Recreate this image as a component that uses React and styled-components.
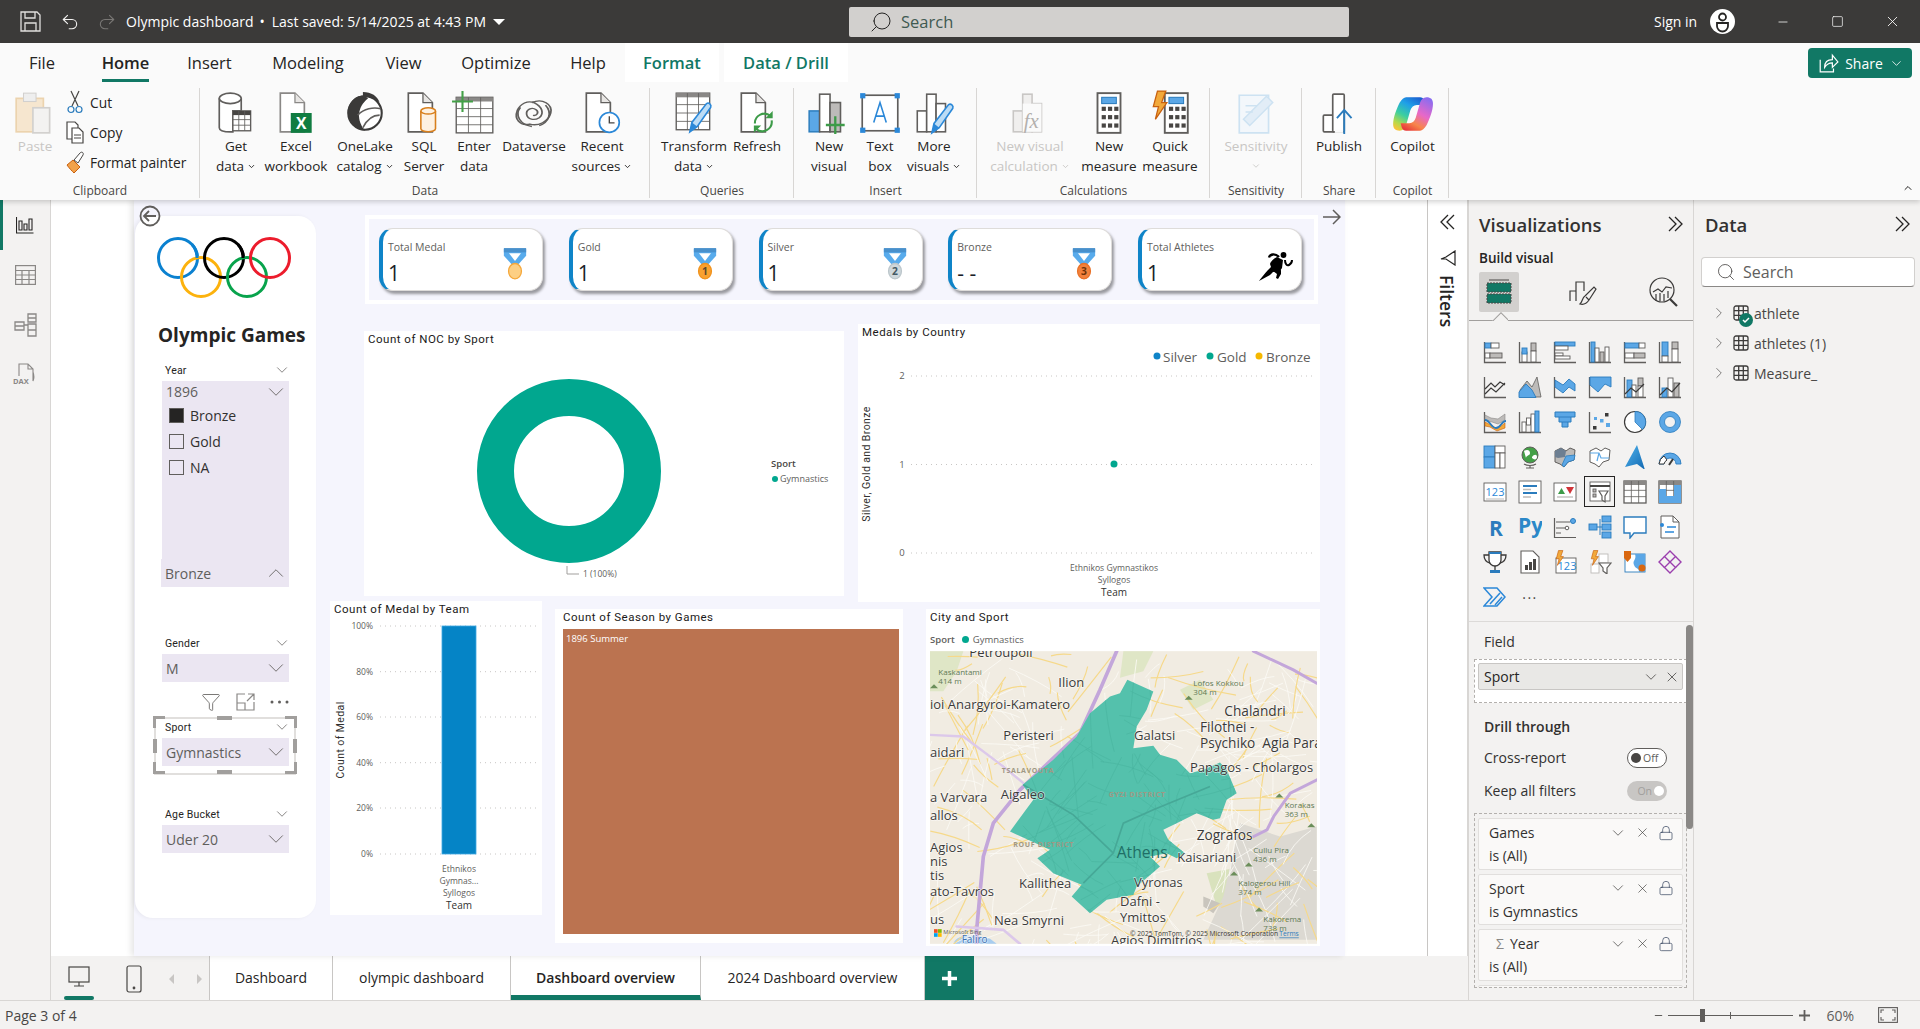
import React from "react";
import styled, { createGlobalStyle } from "styled-components";
import { ChevronDown, ChevronUp, ChevronRight, X, Search, Minus, Square, Lock, Undo2, Redo2, Filter } from "lucide-react";

const UI = '"Open Sans", "Noto Sans", sans-serif';
const DIN = 'Roboto, "Open Sans", sans-serif';
const DK = "#605e5c";
const BL = "#5ba7e6";
const BD = "#2b7cbd";
const GR = "#bdbbb9";

const GlobalStyle = createGlobalStyle`
  html, body { margin: 0; padding: 0; background: #f3f2f1; overflow: hidden; }
  body { font-family: ${UI}; color: #252423; }
  * { box-sizing: border-box; }
  svg { display: block; }
`;

const Shell = styled.div`
  width: 1920px;
  height: 1029px;
  display: flex;
  flex-direction: column;
  overflow: hidden;
`;

/* ---------- title bar ---------- */
const TitleBar = styled.header`
  height: 43px;
  flex: none;
  background: #3b3a39;
  color: #fff;
  display: flex;
  align-items: center;
  position: relative;
`;
const TitleLeft = styled.div`
  display: flex;
  align-items: center;
  width: 849px;
  padding-left: 20px;
  flex: none;
`;
const TitleText = styled.span`
  font-size: 14px;
  white-space: nowrap;
  margin-left: ${(p) => p.$ml || 0}px;
`;
const Caret = styled.span`
  width: 0;
  height: 0;
  border-left: 6px solid transparent;
  border-right: 6px solid transparent;
  border-top: 6px solid #fff;
  margin-left: 7px;
`;
const SearchBox = styled.div`
  width: 500px;
  height: 30px;
  flex: none;
  background: #d2d0ce;
  border-radius: 2px;
  display: flex;
  align-items: center;
  padding-left: 20px;
  gap: 8px;
  color: #3f5a52;
  font-size: 16.5px;
`;
const TitleRight = styled.div`
  display: flex;
  align-items: center;
  margin-left: 305px;
  flex: none;
`;
const SignIn = styled.span`
  font-size: 14px;
  width: 56px;
`;
const Avatar = styled.span`
  width: 25px;
  height: 25px;
  border-radius: 50%;
  background: #fff;
  display: flex;
  align-items: center;
  justify-content: center;
  margin-right: 20px;
`;
const WinBtn = styled.span`
  width: 55px;
  display: flex;
  justify-content: center;
`;
const Flip = styled.span`
  display: inline-flex;
  transform: scaleX(-1);
`;

/* ---------- ribbon ---------- */
const Ribbon = styled.div`
  height: 157px;
  flex: none;
  background: #fafafa;
  box-shadow: 0 2px 5px rgba(0, 0, 0, 0.18);
  position: relative;
  z-index: 3;
`;
const TabsRow = styled.nav`
  height: 39px;
  display: flex;
  align-items: stretch;
  position: relative;
`;
const RibbonTab = styled.span`
  position: relative;
  display: flex;
  align-items: center;
  justify-content: center;
  width: ${(p) => p.$w}px;
  margin-left: ${(p) => p.$ml || 0}px;
  font-size: 16.5px;
  white-space: nowrap;
  font-weight: ${(p) => (p.$active || p.$ctx ? 600 : 400)};
  color: ${(p) => (p.$ctx ? "#117865" : "#252423")};
  background: ${(p) => (p.$ctx ? "#fff" : "transparent")};
  ${(p) =>
    p.$active &&
    `&::after { content: ""; position: absolute; left: 0; right: 0; bottom: 0; height: 3px; background: #117865; }`}
`;
const ShareBtn = styled.button`
  position: absolute;
  left: 1808px;
  top: 5px;
  width: 104px;
  height: 30px;
  border: 0;
  border-radius: 4px;
  background: #117865;
  color: #fff;
  font: 400 14px ${UI};
  display: flex;
  align-items: center;
  justify-content: center;
  gap: 6px;
  padding: 0 0 0 2px;
`;
const ToolsRow = styled.div`
  display: flex;
  padding-top: 6px;
  position: relative;
`;
const Group = styled.section`
  width: ${(p) => p.$w}px;
  height: 112px;
  flex: none;
  display: flex;
  flex-direction: column;
  position: relative;
  &::after {
    content: "";
    position: absolute;
    right: 0;
    top: 0;
    bottom: 2px;
    width: 1px;
    background: #d8d6d4;
  }
`;
const GroupBody = styled.div`
  height: 94px;
  flex: none;
  display: flex;
  padding-top: 2px;
  padding-left: ${(p) => p.$pl || 0}px;
  justify-content: ${(p) => (p.$center ? "center" : "flex-start")};
`;
const GroupLabel = styled.div`
  height: 18px;
  text-align: center;
  font-size: 12px;
  line-height: 18px;
  color: #484644;
`;
const BigBtn = styled.div`
  width: ${(p) => p.$w}px;
  flex: none;
  display: flex;
  flex-direction: column;
  align-items: center;
  font-size: 13.5px;
  line-height: 20px;
  white-space: nowrap;
  color: ${(p) => (p.$off ? "#c8c6c4" : "#252423")};
`;
const IconBox = styled.div`
  height: 46px;
  display: flex;
  align-items: flex-start;
  justify-content: center;
`;
const BtnLine = styled.span`
  display: flex;
  align-items: center;
  gap: 3px;
  height: 20px;
`;
const SmallCol = styled.div`
  display: flex;
  flex-direction: column;
  margin-top: -3px;
`;
const SmallBtn = styled.div`
  height: 30px;
  display: flex;
  align-items: center;
  gap: 6px;
  font-size: 13.8px;
  white-space: nowrap;
`;
const RibbonSvg = styled.svg`
  width: 46px;
  height: 46px;
`;
const Collapse = styled.span`
  position: absolute;
  left: 1902px;
  top: 100px;
`;

/* ---------- main ---------- */
const Main = styled.div`
  flex: 1;
  display: flex;
  min-height: 0;
`;
const Rail = styled.aside`
  width: 51px;
  flex: none;
  background: #f3f2f1;
  border-right: 1px solid #d8d6d4;
  display: flex;
  flex-direction: column;
  align-items: center;
`;
const RailItem = styled.div`
  width: 100%;
  height: 50px;
  display: flex;
  align-items: center;
  justify-content: center;
  position: relative;
  ${(p) =>
    p.$active &&
    `&::before { content: ""; position: absolute; left: 0; top: 0; bottom: 0; width: 3px; background: #117865; }`}
`;
const CenterCol = styled.div`
  width: 1417px;
  flex: none;
  display: flex;
  flex-direction: column;
`;
const CanvasRow = styled.div`
  height: 756px;
  display: flex;
  background: #fff;
`;
const Canvas = styled.main`
  width: 1377px;
  flex: none;
  padding-left: 83px;
  border-right: 1px solid #c8c6c4;
`;
const Page = styled.div`
  position: relative;
  width: 1211px;
  height: 756px;
  background: #f5f5fd;
  box-shadow: -3px 0 6px rgba(0, 0, 0, 0.1);
  display: flex;
  padding-top: 15px;
`;
const NavArrow = styled.span`
  position: absolute;
  left: ${(p) => p.$x}px;
  top: ${(p) => p.$y}px;
  z-index: 2;
`;

/* ---------- left slicer card ---------- */
const SideCard = styled.div`
  width: 181px;
  height: 702px;
  margin: 1px 0 0 1px;
  background: #fff;
  border-radius: 18px;
  box-shadow: -2px 0 4px rgba(0, 0, 0, 0.06);
  display: flex;
  flex-direction: column;
  flex: none;
`;
const Logo = styled.svg`
  width: 140px;
  height: 66px;
  margin: 20px 0 0 21px;
`;
const SideTitle = styled.h1`
  margin: 13px 0 0;
  height: 44px;
  padding-left: 23px;
  font: 700 19px/40px ${UI};
  color: #252423;
  white-space: nowrap;
`;
const Slicer = styled.div`
  margin: ${(p) => p.$mt || 0}px 0 0 27px;
  width: 127px;
`;
const SlicerHead = styled.div`
  height: 19px;
  padding: 0 0 3px 3px;
  display: flex;
  justify-content: space-between;
  align-items: center;
  font: 400 10.5px ${DIN};
  color: #252423;
  letter-spacing: 0.2px;
  & > svg {
    margin-right: -2px;
  }
`;
const SelectBox = styled.div`
  height: ${(p) => p.$h || 28}px;
  background: #ebe6f2;
  display: flex;
  justify-content: space-between;
  align-items: center;
  padding: 0 0 0 4px;
  font-size: 14px;
  color: #605e5c;
  margin-left: ${(p) => p.$ml || 0}px;
`;
const ListBox = styled.div`
  height: 157px;
  background: #ebe6f2;
  padding: 0 0 0 7px;
`;
const Option = styled.div`
  height: 26px;
  display: flex;
  align-items: center;
  gap: 6px;
  font-size: 14px;
  color: #323130;
`;
const Check = styled.span`
  width: 15px;
  height: 15px;
  border: 1px solid #605e5c;
  background: ${(p) => (p.$on ? "#252423" : "transparent")};
`;
const VisualTools = styled.div`
  height: 20px;
  margin: 10px 0 0 66px;
  display: flex;
  align-items: center;
  gap: 15px;
`;
const Frame = styled.div`
  position: relative;
  margin: 5px 0 0 19px;
  width: 142px;
  height: 58px;
  padding: 0 5px 0 6px;
  border: 2px solid #e1dfdd;
`;
const Handle = styled.i`
  position: absolute;
  background: #a19f9d;
  width: ${(p) => p.$w}px;
  height: ${(p) => p.$h}px;
  left: ${(p) => p.$l}px;
  top: ${(p) => p.$t}px;
`;

/* ---------- right part of the report ---------- */
const ReportCol = styled.div`
  margin-left: 14px;
  width: 990px;
  flex: none;
  display: flex;
  flex-direction: column;
`;
const KpiStrip = styled.div`
  margin-left: 35px;
  width: 953px;
  height: 89px;
  border: 4px solid #fff;
  background: #f5f5fd;
  display: flex;
  gap: 25.75px;
  padding: 9px 0 0 10px;
`;
const KpiCard = styled.div`
  width: 164px;
  height: 63px;
  flex: none;
  position: relative;
  background: #fff;
  border-radius: 14px;
  border: 1px solid #dedcda;
  border-left: 4px solid #0f84c8;
  box-shadow: 2px 3px 3px rgba(0, 0, 0, 0.38);
  padding: 8px 0 0 5px;
`;
const KpiLabel = styled.div`
  font-size: 10.5px;
  line-height: 20px;
  color: #605e5c;
`;
const KpiValue = styled.div`
  font-size: 21px;
  font-weight: 400;
  line-height: 28px;
  color: #1b1f2a;
  margin-top: 2px;
`;
const KpiIcon = styled.span`
  position: absolute;
  right: ${(p) => p.$r}px;
  top: ${(p) => p.$t}px;
`;
const ChartRow = styled.div`
  display: flex;
  align-items: flex-start;
  margin-top: ${(p) => p.$mt || 0}px;
`;
const Panel = styled.section`
  width: ${(p) => p.$w}px;
  height: ${(p) => p.$h}px;
  margin: ${(p) => p.$mt || 0}px 0 0 ${(p) => p.$ml || 0}px;
  background: #fff;
  flex: none;
`;
const PanelTitle = styled.h2`
  margin: 0;
  height: 16px;
  padding-left: ${(p) => p.$pl || 4}px;
  font: 400 11.5px/16px ${DIN};
  letter-spacing: 0.5px;
  color: #1b1a19;
  white-space: nowrap;
`;
const Treemap = styled.div`
  margin: 4px 4px 0 8px;
  height: 305px;
  background: #bb7350;
  color: #fff;
  font: 400 9.5px/20px ${UI};
  padding-left: 3px;
`;
const MapLegend = styled.div`
  height: 26px;
  padding: 2px 0 0 4px;
  display: flex;
  align-items: center;
  gap: 4px;
  font-size: 9.5px;
  color: #605e5c;
`;
const LegendName = styled.b`
  font-weight: 600;
  margin-right: 3px;
`;
const LegendDot = styled.i`
  width: 7px;
  height: 7px;
  border-radius: 50%;
  background: #01a78f;
`;
const MapSvg = styled.svg`
  width: 387px;
  height: 293px;
  margin-left: 4px;
`;

/* ---------- filters pane ---------- */
const FilterPane = styled.aside`
  width: 40px;
  flex: none;
  background: #fff;
  display: flex;
  flex-direction: column;
  align-items: center;
  padding-top: 14px;
  border-right: 1px solid #d8d6d4;
`;
const FilterLabel = styled.span`
  writing-mode: vertical-rl;
  font-size: 17.5px;
  font-weight: 600;
  margin-top: 9px;
  margin-left: -1px;
`;

/* ---------- page tabs ---------- */
const PageTabs = styled.div`
  height: 44px;
  display: flex;
  background: #f3f2f1;
`;
const TabTools = styled.div`
  width: 159px;
  flex: none;
  display: flex;
  align-items: flex-start;
  padding: 9px 0 0 13px;
  border-right: 1px solid #c8c6c4;
`;
const DeviceBtn = styled.div`
  width: 30px;
  height: 29px;
  display: flex;
  justify-content: center;
  position: relative;
  margin-right: ${(p) => p.$mr || 0}px;
  ${(p) =>
    p.$active &&
    `&::after { content: ""; position: absolute; left: 0; right: 0; bottom: -6px; height: 4px; border-radius: 2px; background: #117865; }`}
`;
const PageTab = styled.div`
  width: ${(p) => p.$w}px;
  flex: none;
  background: #fff;
  border-right: 1px solid #c8c6c4;
  display: flex;
  align-items: center;
  justify-content: center;
  font-size: 14px;
  font-weight: ${(p) => (p.$active ? 600 : 400)};
  border-bottom: ${(p) => (p.$active ? "5px solid #117865" : "0")};
  padding-top: ${(p) => (p.$active ? 3 : 0)}px;
  padding-bottom: ${(p) => (p.$active ? 0 : 2)}px;
`;
const AddTab = styled.div`
  width: 49px;
  background: #117865;
  display: flex;
  align-items: center;
  justify-content: center;
`;

/* ---------- side panes ---------- */
const VizPane = styled.aside`
  width: 226px;
  flex: none;
  background: #f3f2f1;
  border-right: 1px solid #d8d6d4;
  border-left: 1px solid #d8d6d4;
  display: flex;
  flex-direction: column;
  position: relative;
`;
const PaneHead = styled.div`
  height: 48px;
  padding: 0 10px 0 ${(p) => p.$pl}px;
  display: flex;
  align-items: center;
  justify-content: space-between;
  font-size: 18.5px;
  font-weight: 600;
  color: #323130;
`;
const BuildLabel = styled.div`
  padding-left: 10px;
  font-size: 13.5px;
  font-weight: 600;
  line-height: 16px;
  margin-top: 2px;
`;
const BuildTabs = styled.div`
  height: 49px;
  margin-top: 6px;
  padding-left: 10px;
  display: flex;
  align-items: flex-start;
  position: relative;
  border-bottom: 1px solid #a19f9d;
`;
const BuildTab = styled.div`
  width: 40px;
  height: 40px;
  border-radius: 2px;
  display: flex;
  align-items: center;
  justify-content: center;
  margin-right: ${(p) => p.$mr || 0}px;
  background: ${(p) => (p.$active ? "#d2d0ce" : "transparent")};
`;
const Notch = styled.span`
  position: absolute;
  left: 23px;
  bottom: -1px;
  width: 16px;
  height: 9px;
  overflow: hidden;
  &::after {
    content: "";
    position: absolute;
    left: 2px;
    top: 3px;
    width: 12px;
    height: 12px;
    transform: rotate(45deg);
    background: #f3f2f1;
    border: 1px solid #a19f9d;
  }
`;
const VizGrid = styled.div`
  display: grid;
  grid-template-columns: repeat(6, 35px);
  grid-auto-rows: 35px;
  padding: 13px 0 0 8px;
  height: 300px;
  flex: none;
`;
const VizCell = styled.div`
  display: flex;
  align-items: center;
  justify-content: center;
  outline: ${(p) => (p.$on ? "1px solid #252423" : "none")};
  outline-offset: -3px;
  & > svg {
    width: 24px;
    height: 24px;
  }
`;
const WellArea = styled.div`
  flex: 1;
  border-top: 1px solid #dcdad8;
  position: relative;
  padding: 8px 0 0 15px;
  overflow: hidden;
`;
const ScrollThumb = styled.span`
  position: absolute;
  right: 0;
  top: 3px;
  width: 7px;
  height: 204px;
  border-radius: 4px;
  background: #8a8886;
`;
const WellLabel = styled.div`
  font-size: 14px;
  line-height: 24px;
  color: #323130;
  font-weight: ${(p) => (p.$bold ? 600 : 400)};
  margin-top: ${(p) => p.$mt || 0}px;
`;
const DropZone = styled.div`
  width: 213px;
  margin: ${(p) => p.$mt || 0}px 0 0 -10px;
  border: 1px dashed #b3b0ad;
  padding: 4px;
  height: ${(p) => p.$h}px;
  background: ${(p) => (p.$white ? "#fff" : "transparent")};
  overflow: hidden;
`;
const FieldPill = styled.div`
  height: 27px;
  background: #e9e8e6;
  border: 1px solid #c8c6c4;
  border-radius: 2px;
  padding: 0 2px 0 5px;
  display: flex;
  align-items: center;
  justify-content: space-between;
  font-size: 14px;
  margin: -1px;
`;
const PillIcons = styled.span`
  display: flex;
  align-items: center;
  gap: 4px;
`;
const SwitchRow = styled.div`
  display: flex;
  justify-content: space-between;
  align-items: center;
  width: 183px;
  height: 33px;
  font-size: 14px;
  color: #323130;
  margin-top: ${(p) => p.$mt || 0}px;
`;
const Toggle = styled.span`
  width: 40px;
  height: 20px;
  border-radius: 10px;
  display: flex;
  align-items: center;
  justify-content: ${(p) => (p.$on ? "flex-end" : "flex-start")};
  gap: 2px;
  padding: 0 3px;
  font-size: 10.5px;
  color: ${(p) => (p.$on ? "#a19f9d" : "#605e5c")};
  background: ${(p) => (p.$on ? "#c8c6c4" : "#fff")};
  border: ${(p) => (p.$on ? "0" : "1px solid #605e5c")};
`;
const ToggleKnob = styled.i`
  width: 10px;
  height: 10px;
  border-radius: 50%;
  background: ${(p) => (p.$on ? "#fff" : "#484644")};
`;
const FilterCard = styled.div`
  height: 51.5px;
  margin-bottom: 4px;
  background: #faf9f8;
  border: 1px solid #e1dfdd;
  border-radius: 2px;
  padding: 2px 8px 2px 10px;
  font-size: 14px;
  line-height: 23px;
  color: #323130;
  margin-left: -1px;
  margin-right: -1px;
`;
const FilterHead = styled.div`
  display: flex;
  justify-content: space-between;
  align-items: center;
`;
const FilterName = styled.span`
  display: flex;
  align-items: center;
  gap: 6px;
  padding-left: ${(p) => (p.$sum ? 7 : 0)}px;
`;
const FilterIcons = styled.span`
  display: flex;
  align-items: center;
  gap: 8px;
`;
const Sigma = styled.span`
  color: #8a8886;
  font-size: 14px;
`;
const DataPane = styled.aside`
  flex: 1;
  background: #f3f2f1;
`;
const DataSearch = styled.div`
  width: 214px;
  height: 30px;
  margin: 9px 0 0 7px;
  background: #fff;
  border: 1px solid #d2d0ce;
  border-bottom: 1px solid #8a8886;
  border-radius: 4px;
  display: flex;
  align-items: center;
  gap: 7px;
  padding-left: 14px;
  font-size: 16px;
  color: #605e5c;
`;
const TreeList = styled.div`
  padding: 11px 0 0 16px;
`;
const TreeRow = styled.div`
  height: 30px;
  display: flex;
  align-items: center;
  font-size: 14px;
  color: #484644;
  position: relative;
  gap: 5px;
`;
const TreeBadge = styled.span`
  position: absolute;
  left: 29px;
  top: 15px;
  width: 14px;
  height: 14px;
  border-radius: 50%;
  background: #117865;
  display: flex;
  align-items: center;
  justify-content: center;
`;

/* ---------- status bar ---------- */
const StatusBar = styled.footer`
  height: 29px;
  flex: none;
  background: #f3f2f1;
  border-top: 1px solid #d8d6d4;
  display: flex;
  align-items: center;
  padding-left: 5px;
  font-size: 14px;
  color: #484644;
`;
const Zoomer = styled.div`
  margin-left: auto;
  display: flex;
  align-items: center;
  padding-right: 22px;
`;
const ZoomTrack = styled.div`
  position: relative;
  width: 125px;
  height: 1px;
  background: #605e5c;
  margin: 0 6px 0 4px;
`;
const ZoomThumb = styled.i`
  position: absolute;
  left: 32px;
  top: -6px;
  width: 5px;
  height: 13px;
  background: #605e5c;
`;
const ZoomTick = styled.i`
  position: absolute;
  left: 62px;
  top: -3px;
  width: 1px;
  height: 7px;
  background: #605e5c;
`;
const ZoomPct = styled.span`
  font-size: 14px;
  margin: 0 24px 0 16px;
  color: #605e5c;
`;

/* ---------- icons: ribbon ---------- */
const Doc = ({ c = DK }) => (
  <>
    <path d="M7 3h14l9 9v28H7z" fill="#fff" stroke={c} strokeWidth="1.6" />
    <path d="M21 3v9h9" fill="#e8e6e4" stroke={c} strokeWidth="1.2" />
  </>
);
const Pen = ({ x = 0, y = 0 }) => (
  <g transform={`translate(${x} ${y})`}>
    <path d="M3 29 5 20 19 2c2-1.5 5 1 4 3.5L10 24z" fill="#bcdcf5" stroke="#2b88d8" strokeWidth="1.5" />
    <path d="M3 29l2-9 5 4z" fill="#2b88d8" />
  </g>
);
const Bars = ({ c = DK, f = "#fff" }) => (
  <>
    <rect x="6" y="20" width="9" height="20" fill={f} stroke={c} strokeWidth="1.5" />
    <rect x="15" y="4" width="9" height="36" fill={f} stroke={c} strokeWidth="1.5" />
    <rect x="24" y="13" width="9" height="27" fill={f} stroke={c} strokeWidth="1.5" />
  </>
);
const Grid = ({ x, y, w, h, c = DK, head = "#8a8886", rows = 3, cols = 3 }) => {
  const lines = [];
  for (let i = 1; i < rows; i++) lines.push(`M${x} ${y + 3 + ((h - 3) * i) / rows}h${w}`);
  for (let i = 1; i < cols; i++) lines.push(`M${x + (w * i) / cols} ${y}v${h}`);
  return (
    <>
      <rect x={x} y={y} width={w} height={h} fill="#fff" stroke={c} strokeWidth="1.3" />
      <rect x={x} y={y} width={w} height="4" fill={head} />
      <path d={lines.join("")} stroke={c} strokeWidth="0.8" />
    </>
  );
};
const Calc = ({ x = 0 }) => {
  const keys = [];
  for (let r = 0; r < 3; r++)
    for (let c = 0; c < 3; c++)
      keys.push(<rect key={`${r}${c}`} x={x + 4 + c * 6} y={16 + r * 8} width="4" height="4" fill="#484644" />);
  return (
    <>
      <rect x={x} y="3" width="22" height="38" fill="#fff" stroke={DK} strokeWidth="1.8" />
      <rect x={x + 4} y="7" width="14" height="6" fill="#5ba7e6" stroke="#2b7cbd" />
      {keys}
    </>
  );
};
const Bolt = () => <path d="M10 1h8l-4 11h5L8 28l3-12H6z" fill="#f2a93b" stroke="#c8600f" strokeWidth="1.2" />;

const ribbonIcons = {
  paste: (
    <>
      <rect x="4" y="8" width="26" height="32" fill="#f6e6cf" stroke="#ecd3ae" strokeWidth="1.6" />
      <rect x="11" y="3" width="12" height="8" fill="#eee" stroke="#d2d0ce" />
      <rect x="20" y="17" width="16" height="24" fill="#f3f2f1" stroke="#d2d0ce" strokeWidth="1.6" />
    </>
  ),
  getData: (
    <>
      <path d="M6 8v28c0 3 5 4 11 4h2V20h8V8" fill="#fff" stroke={DK} strokeWidth="1.6" />
      <ellipse cx="16.5" cy="8" rx="10.5" ry="5" fill="#fff" stroke={DK} strokeWidth="1.6" />
      <Grid x={19} y={20} w={17} h={19} head="#484644" />
    </>
  ),
  excel: (
    <>
      <Doc c="#8a8886" />
      <rect x="17" y="22" width="20" height="19" fill="#107c41" />
      <text x="27" y="37" fontSize="15" fontWeight="700" fill="#fff" textAnchor="middle" fontFamily={UI}>X</text>
    </>
  ),
  onelake: (
    <>
      <circle cx="22" cy="22" r="16" fill="#fff" stroke="#3b3a39" strokeWidth="2" />
      <path d="M22 6c-10-3-20 10-15 22 6 10 15 11 15 11-8-10-8-22 3-31z" fill="#3b3a39" />
      <path d="M20 2c8 0 14 4 16 10-5-4-12-6-16-5z" fill="#3b3a39" />
      <path d="M15 24c6-6 15-8 22-6M20 36c4-8 10-12 16-12" fill="none" stroke="#605e5c" strokeWidth="1.5" />
    </>
  ),
  sql: (
    <>
      <Doc />
      <path d="M19 20v17c0 2 4 3 7 3s7-1 7-3V20" fill="#fdf1e2" stroke="#d87f1c" strokeWidth="1.5" />
      <ellipse cx="26" cy="20" rx="7" ry="3" fill="#fdf1e2" stroke="#d87f1c" strokeWidth="1.5" />
    </>
  ),
  enter: (
    <>
      <Grid x={5} y={7} w={35} h={34} rows={4} />
      <path d="M11 1v20M1 11h20" stroke="#43a047" strokeWidth="2" />
    </>
  ),
  dataverse: (
    <g fill="none" stroke={DK} strokeWidth="1.7" transform="translate(0 6) scale(1 0.76)">
      <path d="M20 8C30 2 40 10 38 21c-2 11-12 17-20 14C8 38 3 28 6 18 9 9 16 5 22 8c8 5 10 14 5 19-5 4-11 2-12-4-1-6 5-10 9-6 3 3 1 8-3 7" />
      <path d="M9 14C3 24 9 36 20 38M33 11c7 10 3 22-6 26" />
    </g>
  ),
  recent: (
    <>
      <Doc />
      <circle cx="29" cy="31" r="9.5" fill="#fff" stroke="#2b88d8" strokeWidth="1.6" />
      <path d="M29 25v6.5h5" fill="none" stroke="#484644" strokeWidth="1.3" />
    </>
  ),
  transform: (
    <>
      <Grid x={5} y={3} w={32} h={35} rows={4} />
      <Pen x={15} y={11} />
    </>
  ),
  refresh: (
    <>
      <Doc />
      <g fill="none" stroke="#3d9b48" strokeWidth="2">
        <path d="M20 32a9 9 0 0 1 15-7" />
        <path d="M36 29a9 9 0 0 1-15 8" />
      </g>
      <path d="M37 20v7h-7zM19 41v-7h7z" fill="#3d9b48" />
    </>
  ),
  newVisual: (
    <>
      <rect x="3" y="20" width="10" height="20" fill="#5ba7e6" stroke="#2b7cbd" strokeWidth="1.4" />
      <rect x="13" y="4" width="10" height="36" fill="#fff" stroke={DK} strokeWidth="1.5" />
      <rect x="23" y="12" width="10" height="28" fill="#bdbbb9" stroke={DK} strokeWidth="1.5" />
      <path d="M28 25v17M19 33.5h18" stroke="#3d9b48" strokeWidth="2.2" />
    </>
  ),
  textBox: (
    <>
      <rect x="5" y="5" width="34" height="34" fill="#fff" stroke={DK} strokeWidth="1.6" />
      <g fill="#2b88d8">
        <rect x="3" y="3" width="5" height="5" />
        <rect x="36" y="3" width="5" height="5" />
        <rect x="3" y="36" width="5" height="5" />
        <rect x="36" y="36" width="5" height="5" />
      </g>
      <path d="M16 31l6-19 6 19M18 25h8" fill="none" stroke="#2b88d8" strokeWidth="1.5" />
    </>
  ),
  moreVisuals: (
    <>
      <Bars />
      <Pen x={17} y={12} />
    </>
  ),
  calcVisual: (
    <>
      <Bars c="#c8c6c4" f="#f0efee" />
      <rect x="15" y="13" width="18" height="27" fill="#fafafa" />
      <text x="16" y="36" fontSize="20" fontStyle="italic" fontFamily='"Liberation Serif", serif' fill="#b3b0ad">fx</text>
    </>
  ),
  measure: <Calc x={11} />,
  quick: (
    <>
      <Calc x={17} />
      <Bolt />
    </>
  ),
  sensitivity: (
    <g opacity="0.55">
      <path d="M6 5h28v36H6z" fill="#eef6fc" stroke="#a9cfec" strokeWidth="1.6" />
      <path d="M10 28l22-22 6 6-22 22z" fill="#cfe4f5" stroke="#a9cfec" strokeWidth="1.4" />
      <path d="M12 15h11M12 21h7" stroke="#a9cfec" strokeWidth="1.4" />
    </g>
  ),
  publish: (
    <>
      <rect x="7" y="24" width="11" height="16" rx="1" fill="#fff" stroke={DK} strokeWidth="1.6" />
      <rect x="16" y="4" width="11" height="36" rx="1" fill="#fff" stroke={DK} strokeWidth="1.6" />
      <rect x="18" y="38" width="8" height="3" fill="#fafafa" />
      <path d="M27 42V20M20 27l7-8 7 8" fill="none" stroke="#2b7cbd" strokeWidth="1.8" />
    </>
  ),
  copilot: (
    <>
      <defs>
        <linearGradient id="cpA" gradientUnits="userSpaceOnUse" x1="24" y1="1" x2="6" y2="32">
          <stop offset="0" stopColor="#1b5fd0" />
          <stop offset="0.3" stopColor="#1fa0e8" />
          <stop offset="0.6" stopColor="#3ccfa0" />
          <stop offset="0.85" stopColor="#b6d94a" />
          <stop offset="1" stopColor="#f7c53a" />
        </linearGradient>
        <linearGradient id="cpB" gradientUnits="userSpaceOnUse" x1="24" y1="1" x2="6" y2="32">
          <stop offset="0" stopColor="#e83a3a" />
          <stop offset="0.25" stopColor="#f7864a" />
          <stop offset="0.55" stopColor="#e868c8" />
          <stop offset="1" stopColor="#8a6cf0" />
        </linearGradient>
      </defs>
      <g transform="translate(3 6) scale(1.03)">
        <path d="M12 1H25c2 0 3 1 4 3l1 4h-8c-3 0-5 2-6 5l-4 14c-1 3-3 5-6 5-4 0-6-2-6-6 0-6 3-14 6-20C8 3 10 1 12 1z" fill="url(#cpA)" />
        <path transform="rotate(180 18.5 16.5)" d="M12 1H25c2 0 3 1 4 3l1 4h-8c-3 0-5 2-6 5l-4 14c-1 3-3 5-6 5-4 0-6-2-6-6 0-6 3-14 6-20C8 3 10 1 12 1z" fill="url(#cpB)" />
      </g>
    </>
  ),
};
const RI = ({ n }) => <RibbonSvg viewBox="0 0 44 44">{ribbonIcons[n]}</RibbonSvg>;

const Big = ({ w, icon, lines, caret, off }) => (
  <BigBtn $w={w} $off={off}>
    <IconBox>
      <RI n={icon} />
    </IconBox>
    {lines.map((l, i) => (
      <BtnLine key={l + i}>
        {l}
        {caret && i === lines.length - 1 && <ChevronDown size={9} strokeWidth={2.4} />}
      </BtnLine>
    ))}
  </BigBtn>
);

/* ---------- icons: visual gallery ---------- */
const Ax = () => <path d="M1.5 2v20.5H23" fill="none" stroke={DK} strokeWidth="1.3" />;
const R = (x, y, w, h, f = "#fff", s = DK) => <rect x={x} y={y} width={w} height={h} fill={f} stroke={s} strokeWidth="0.9" />;
const LineP = (d, s = "#3b3a39", w = 1.2) => <path d={d} fill="none" stroke={s} strokeWidth={w} />;

const vizIcons = [
  <><Ax />{R(2, 3, 6, 5, BL, BD)}{R(8, 3, 8, 5, "#fff")}{R(2, 13, 5, 5, "#fff")}{R(7, 13, 12, 5, GR)}</>,
  <><Ax />{R(4, 12, 5, 10, "#fff")}{R(4, 8, 5, 6, BL, BD)}{R(13, 3, 5, 8, GR)}{R(13, 11, 5, 11, "#fff")}</>,
  <><Ax />{R(2, 2, 20, 4, BL, BD)}{R(2, 6, 13, 4, "#fff")}{R(2, 13, 8, 3, "#fff")}{R(2, 16, 15, 3, "#fff")}</>,
  <><Ax />{R(3, 2, 4, 20, BL, BD)}{R(7, 8, 4, 14, "#fff")}{R(12, 12, 4, 10, GR)}{R(17, 7, 4, 15, "#fff")}</>,
  <><Ax />{R(2, 3, 14, 5, BL, BD)}{R(16, 3, 6, 5, "#fff")}{R(2, 13, 9, 5, "#fff")}{R(11, 13, 11, 5, GR)}</>,
  <><Ax />{R(4, 2, 6, 14, BL, BD)}{R(4, 16, 6, 6, "#fff")}{R(14, 2, 6, 7, GR)}{R(14, 9, 6, 13, "#fff")}</>,
  <><Ax />{LineP("M2 14l6-6 4 4 5-5 5 3")}{LineP("M2 19l6-6 5 4 9-9")}</>,
  <><path d="M2 22V15L9 6l5 6 5-10 4 20z" fill={GR} stroke={DK} strokeWidth="0.8" /><path d="M1 22.5V17l7-8 6 6 4 7.5z" fill={BL} stroke={BD} strokeWidth="0.9" /></>,
  <><Ax /><path d="M2 5l8 5 6-6 6 5v7l-6-4-6 6-8-6z" fill={BL} stroke={BD} strokeWidth="0.9" /></>,
  <><Ax /><path d="M2 2h21v10l-6-3-7 8-8-7z" fill={BL} stroke={BD} strokeWidth="0.9" /></>,
  <><Ax />{R(4, 5, 5, 17, BL, BD)}{R(9, 10, 4, 12, "#fff")}{R(15, 3, 5, 8, GR)}{R(15, 11, 5, 11, "#fff")}{LineP("M2 19l6-6 5 4 8-8")}</>,
  <><Ax />{R(4, 13, 5, 9, BL, BD)}{R(10, 3, 5, 19, "#fff")}{R(16, 8, 5, 14, GR)}{LineP("M2 20l7-7 5 4 8-9")}</>,
  <><Ax /><path d="M2 5l6 3 7 1 7-5v6l-7 4-6-2-7-2z" fill={GR} stroke="#8a8886" strokeWidth="0.6" /><path d="M2 12l6 3 6 4 8-6v5l-8 3-7-4-5-1z" fill="#f2a93b" stroke="#c8600f" strokeWidth="0.6" />{LineP("M2 10c5 0 6 8 11 8s5-7 10-7", "#2b7cbd", 1.8)}</>,
  <><Ax />{R(4, 12, 4, 10, "#fff")}{R(8.5, 8, 4, 7, "#fff")}{R(13, 4, 4, 18, "#fff")}{R(17, 1, 4, 21, BL, BD)}</>,
  <><path d="M2 2h20v5h-4v5h-3v5H9v-5H6V7H2z" fill={BL} stroke={BD} strokeWidth="1" /><path d="M6 7h12M9 12h6" stroke={BD} strokeWidth="0.9" /></>,
  <><Ax /><g fill="#3b3a39"><rect x="17" y="3" width="3.5" height="3.5" /><rect x="5" y="16" width="3.5" height="3.5" /></g><g fill={BL}><rect x="6" y="7" width="3" height="3" /><rect x="12" y="9" width="3.5" height="3.5" /><rect x="18" y="13" width="4" height="4" /></g></>,
  <><circle cx="12" cy="12" r="10.5" fill="#fff" stroke="#3b3a39" strokeWidth="1.2" /><path d="M12 12V1.5A10.5 10.5 0 0 1 19.5 19.5z" fill={BL} stroke={BD} strokeWidth="0.8" /></>,
  <><circle cx="12" cy="12" r="8" fill="none" stroke={BL} strokeWidth="5" /><circle cx="12" cy="12" r="10.5" fill="none" stroke={BD} strokeWidth="0.8" /><circle cx="12" cy="12" r="5.5" fill="none" stroke={BD} strokeWidth="0.8" /></>,
  <>{R(1, 1, 11, 11, BL, BD)}{R(1, 12, 11, 11, BL, BD)}{R(12, 1, 10, 7, "#fff")}{R(12, 8, 5, 15, "#fff")}{R(17, 8, 5, 15, "#fff")}</>,
  <><circle cx="12" cy="10" r="8" fill="#43a047" stroke={DK} strokeWidth="1" /><path d="M6 6c3-2 6-1 6 2s-4 2-4 5M14 12c2-3 5-3 5 0s-3 3-5 1" fill="#fff" /><path d="M6 19c3 2 9 2 12 0M12 20v3M8 23h8" fill="none" stroke={DK} strokeWidth="1.2" /></>,
  <><path d="M2 6l6-3 5 3 4-3 5 2-1 10-6 2-4 5-4-3-5-2z" fill={GR} stroke={DK} strokeWidth="1" /><path d="M2 6l6-3 5 3-1 6-7 1-3-1z" fill="#6d7f92" /><path d="M13 11l9-1-1 5-6 2-4 5-2-2z" fill={BL} stroke={BD} strokeWidth="0.8" /></>,
  <><path d="M2 6l6-3 5 3 4-3 5 2-1 10-6 2-4 5-4-3-5-2z" fill="#fff" stroke={DK} strokeWidth="1" /><path d="M2 8h9l2 5h8M11 8l-2 8" fill="none" stroke={BL} strokeWidth="1.2" /></>,
  <><defs><linearGradient id="azA" x1="0" y1="0" x2="1" y2="1"><stop offset="0" stopColor="#50b4ee" /><stop offset="1" stopColor="#1067b0" /></linearGradient></defs><path d="M14 0l8 25-8-6-12 3z" fill="url(#azA)" /></>,
  <><path d="M1 19a11 11 0 0 1 22 0h-5a6 6 0 0 0-12 0z" fill={BL} stroke={BD} strokeWidth="0.9" /><path d="M1 19a11 11 0 0 1 5-8l3 4a6 6 0 0 0-3 4z" fill="#fff" stroke="#3b3a39" strokeWidth="1" /><path d="M11 20l4-6" stroke="#3b3a39" strokeWidth="2" /></>,
  <>{R(1, 3, 22, 18, "#fff", DK)}<text x="12" y="16" fontSize="11" fill="#2b88d8" textAnchor="middle" fontFamily={UI}>123</text><path d="M3 19h18" stroke={GR} /></>,
  <>{R(1, 1, 22, 22, "#fff", DK)}<path d="M5 6h14M5 13h14" stroke="#2b7cbd" strokeWidth="2" /><path d="M5 9.5h8M5 17h8" stroke={GR} strokeWidth="1.3" /></>,
  <>{R(1, 3, 22, 18, "#fff", DK)}<path d="M5 14l3.5-6 3.5 6z" fill="#3d9b48" /><path d="M13 7h8l-4 7z" fill="#d13438" /><path d="M4 17h16" stroke={GR} strokeWidth="1.3" /></>,
  <>{R(2, 2, 20, 19, "#fff", DK)}<path d="M2 6h20" stroke="#484644" strokeWidth="2" />{R(5, 9, 3, 3, GR)}{R(5, 14, 3, 3, GR)}<path d="M11 11h9l-3 5v6l-3-2v-4z" fill="#fff" stroke={DK} strokeWidth="1.2" /></>,
  <Grid x={1} y={1} w={22} h={22} rows={3} cols={3} />,
  <><Grid x={1} y={1} w={22} h={22} rows={3} cols={3} /><rect x="1" y="9" width="7" height="14" fill={BL} /><rect x="8" y="16" width="15" height="7" fill={BL} /><rect x="16" y="5" width="7" height="11" fill={BL} /></>,
  <text x="6" y="21" fontSize="21" fontWeight="700" fill="#2b7cbd" fontFamily={UI}>R</text>,
  <text x="0" y="18" fontSize="21" fontWeight="700" fill="#2b88c8" fontFamily={UI}>Py</text>,
  <><path d="M1.5 3v19.5H23" fill="none" stroke={DK} strokeWidth="1.2" /><path d="M3 7h14M3 13h9M3 18h5" stroke={DK} strokeWidth="1" /><circle cx="20" cy="6" r="2.5" fill={BL} stroke={BD} /><circle cx="14" cy="13" r="1.8" fill="#fff" stroke={DK} /></>,
  <>{R(1, 9, 8, 6, BL, BD)}{R(14, 1, 9, 6, BL, BD)}{R(14, 9, 9, 6, BL, BD)}{R(14, 17, 9, 6, BL, BD)}<path d="M9 12h5M12 4v16" stroke={BD} /></>,
  <path d="M1 2h22v16H11l-4 5v-5H1z" fill="#fff" stroke="#2b7cbd" strokeWidth="1.4" />,
  <><path d="M3 1h12l6 6v16H3z" fill="#fff" stroke={DK} strokeWidth="1" /><path d="M15 1v6h6" fill="none" stroke={DK} /><circle cx="4" cy="10" r="2" fill="#2b88d8" /><path d="M9 12h9M7 17h9" stroke="#2b88d8" strokeWidth="1.3" /></>,
  <><path d="M6 2h12v8a6 6 0 0 1-12 0z" fill="#fff" stroke="#3b3a39" strokeWidth="1.3" /><path d="M6 2h12v2H6z" fill="#2b7cbd" /><path d="M6 5H1c0 5 2 7 6 8M18 5h5c0 5-2 7-6 8M12 16v4" fill="none" stroke="#3b3a39" strokeWidth="1.3" /><rect x="7" y="20" width="10" height="3" fill="#2b7cbd" /></>,
  <><path d="M3 1h12l6 6v16H3z" fill="#fff" stroke={DK} strokeWidth="1.1" /><g fill="#484644"><rect x="7" y="15" width="3" height="5" /><rect x="11" y="12" width="3" height="8" /><rect x="15" y="9" width="3" height="11" /></g></>,
  <>{R(3, 8, 20, 15, "#fff", DK)}<text x="14" y="20" fontSize="11" fill="#2b88d8" textAnchor="middle" fontFamily={UI}>123</text><g transform="scale(0.55)"><Bolt /></g></>,
  <>{R(3, 14, 8, 9, "#fff", GR)}{R(11, 4, 9, 9, "#fff", GR)}<path d="M11 13h12l-4 5v6l-4-3v-3z" fill="#fff" stroke={DK} strokeWidth="1.2" /><g transform="scale(0.55)"><Bolt /></g></>,
  <>{R(2, 4, 20, 18, "#fff", "#2b7cbd")}<path d="M12 4c2 6-3 6-1 11s5 2 5 7h6V4z" fill={BL} /><path d="M1 1h7v7l-3.5 4L1 8z" fill="#d9670f" /><circle cx="19" cy="18" r="3.5" fill="#d9670f" /></>,
  <g fill="none" stroke="#9b3fae" strokeWidth="1.4"><path d="M12 1l5.5 5.5L12 12 6.5 6.5z" /><path d="M12 12l5.5 5.5L12 23l-5.5-5.5z" /><path d="M6.5 6.5L1 12l5.5 5.5M17.5 6.5L23 12l-5.5 5.5" /></g>,
  <g fill="none" stroke="#2b88d8" strokeWidth="1.5"><path d="M1 3h13l8 9-8 9H1l8-9z" /><path d="M7 19l10-11M12 20l7-8" /></g>,
  <text x="12" y="14" fontSize="14" fill="#484644" textAnchor="middle" fontFamily={UI} letterSpacing="1.5">...</text>,
];

/* ---------- report bits ---------- */
const Medal = ({ fill, line, num, label = "#5e4a2a" }) => (
  <svg width="24" height="33" viewBox="0 0 28 38">
    <path d="M1 2h26v8L17 21h-6L1 10z" fill="#58abec" />
    <path d="M7 7h14l-7 9z" fill="#fff" />
    <path d="M1 1h26v5H1z" fill="#4890cc" />
    <ellipse cx="14" cy="28" rx="7.5" ry="9" fill={fill} stroke={line} strokeWidth="1.5" />
    {num && (
      <text x="14" y="32.5" fontSize="12" fontWeight="700" textAnchor="middle" fill={label} fontFamily={UI}>
        {num}
      </text>
    )}
  </svg>
);
const Runner = () => (
  <svg width="34" height="31" viewBox="0 0 34 31">
    <circle cx="24.5" cy="5" r="2.9" fill="#000" />
    <path d="M10 7.5C11 4 16 3 20 7" fill="none" stroke="#000" strokeWidth="2.4" />
    <path d="M18 7l6 3-1 8-2 3-7 1-3 3-11 6c3-4 6-8 9-11l3-3-1-3c1-3 3-5 7-7z" fill="#000" />
    <path d="M14 21l8-1 0 4-3 5-2-1 1-4z" fill="#000" />
    <path d="M26 10c0 4 2 6 4 5s3-3 3-5" fill="none" stroke="#000" strokeWidth="2" />
  </svg>
);
const ChartText = styled.text`
  font-family: ${(p) => p.$font || UI};
  font-size: ${(p) => p.$size || 9}px;
  font-weight: ${(p) => p.$weight || 400};
  fill: ${(p) => p.$color || "#605e5c"};
`;
const Gridline = ({ x1, x2, y }) => (
  <line x1={x1} x2={x2} y1={y} y2={y} stroke="#c8c6c4" strokeWidth="1" strokeDasharray="1 4" />
);

const NocChart = () => (
  <svg width="480" height="249" viewBox="0 0 480 249">
    <circle cx="205" cy="124" r="73.5" fill="none" stroke="#01a78f" strokeWidth="37" />
    <path d="M203 219v8h12" fill="none" stroke="#a19f9d" />
    <ChartText x="219" y="230" $size={8.5}>1 (100%)</ChartText>
    <ChartText x="407" y="120" $size={9.5} $weight={600} $color="#484644">Sport</ChartText>
    <circle cx="411" cy="132" r="3" fill="#01a78f" />
    <ChartText x="416" y="135" $size={9}>Gymnastics</ChartText>
  </svg>
);
const CountryChart = () => (
  <svg width="462" height="262" viewBox="0 0 462 262">
    <circle cx="299" cy="16" r="3.5" fill="#0f84c8" />
    <ChartText x="305" y="22" $size={13.5}>Silver</ChartText>
    <circle cx="352" cy="16" r="3.5" fill="#01a78f" />
    <ChartText x="359" y="22" $size={13.5}>Gold</ChartText>
    <circle cx="401" cy="16" r="3.5" fill="#f5b800" />
    <ChartText x="408" y="22" $size={13.5}>Bronze</ChartText>
    {[[36, "2"], [124.5, "1"], [213, "0"]].map(([y, t]) => (
      <g key={t}>
        <Gridline x1={53} x2={456} y={y} />
        <ChartText x="44" y={y + 3} textAnchor="middle" $size={9.5}>{t}</ChartText>
      </g>
    ))}
    <circle cx="256" cy="124" r="3.5" fill="#01a78f" />
    <ChartText transform="translate(12 124) rotate(-90)" textAnchor="middle" $font={DIN} $size={10.5} $color="#323130" letterSpacing="0.4">
      Silver, Gold and Bronze
    </ChartText>
    <ChartText x="256" y="231" textAnchor="middle" $size={8.6}>Ethnikos Gymnastikos</ChartText>
    <ChartText x="256" y="243" textAnchor="middle" $size={8.6}>Syllogos</ChartText>
    <ChartText x="256" y="256" textAnchor="middle" $size={10} $weight={500} $color="#323130">Team</ChartText>
  </svg>
);
const TeamChart = () => (
  <svg width="212" height="298" viewBox="0 0 212 298">
    {[[9, "100%"], [54.7, "80%"], [100, "60%"], [145.7, "40%"], [191, "20%"], [237, "0%"]].map(([y, t]) => (
      <g key={t}>
        <Gridline x1={50} x2={206} y={y} />
        <ChartText x="43" y={y + 3} textAnchor="end" $size={8.5}>{t}</ChartText>
      </g>
    ))}
    <rect x="112" y="9" width="34" height="228" fill="#0584c6" stroke="#3fa9e0" strokeWidth="0.8" />
    <ChartText transform="translate(14 123) rotate(-90)" textAnchor="middle" $font={DIN} $size={10.5} $color="#323130" letterSpacing="0.4">
      Count of Medal
    </ChartText>
    <ChartText x="129" y="255" textAnchor="middle" $size={8.5}>Ethnikos</ChartText>
    <ChartText x="129" y="267" textAnchor="middle" $size={8.5}>Gymnas...</ChartText>
    <ChartText x="129" y="279" textAnchor="middle" $size={8.5}>Syllogos</ChartText>
    <ChartText x="129" y="292" textAnchor="middle" $size={10} $weight={500} $color="#323130">Team</ChartText>
  </svg>
);

/* fake street network for the map, fixed seed so it stays the same */
const streets = (() => {
  const out = [];
  let s = 17;
  const rnd = () => {
    s = (s * 16807) % 2147483647;
    return s / 2147483647;
  };
  for (let i = 0; i < 320; i++) {
    const x = 30 + rnd() * 1160;
    const y = 124 + rnd() * 880;
    const a = rnd() * Math.PI;
    const l = 50 + rnd() * 170;
    const mx = x + Math.cos(a) * l * 0.5 + (rnd() - 0.5) * 30;
    const my = y + Math.sin(a) * l * 0.5 + (rnd() - 0.5) * 30;
    out.push({
      d: `M${x.toFixed(0)} ${y.toFixed(0)}Q${mx.toFixed(0)} ${my.toFixed(0)} ${(x + Math.cos(a) * l).toFixed(0)} ${(y + Math.sin(a) * l).toFixed(0)}`,
      c: i % 3 === 0 ? "#f6d98a" : "#fbfaf5",
      w: i % 3 === 0 ? 3.5 : 2.5,
    });
  }
  return out;
})();

const CITY =
  "M622 210 700 245 680 300 650 350 640 415 700 408 720 435 770 450 810 490 850 480 900 458 920 480 950 550 920 570 900 625 880 630 830 610 770 640 730 660 745 690 795 730 770 745 740 730 690 740 720 770 650 830 640 855 560 870 510 910 455 860 485 825 400 790 352 745 390 720 270 665 310 610 340 570 308 525 400 450 470 380 510 310 570 260 600 250z";

const mapLabels = [
  ["Petroupoli", 148, 141, 39], ["Ilion", 415, 232, 39], ["ioi Anargyroi-Kamatero", 30, 298, 39],
  ["Peristeri", 250, 392, 39], ["Galatsi", 642, 392, 39], ["Filothei -", 840, 368, 41],
  ["Psychiko", 840, 414, 41], ["Agia Para", 1027, 414, 41], ["Chalandri", 913, 318, 41],
  ["aidari", 30, 441, 39], ["Papagos - Cholargos", 810, 487, 39], ["Aigaleo", 242, 568, 39],
  ["a Varvara", 30, 577, 39], ["allos", 30, 632, 39], ["Zografos", 830, 690, 41],
  ["Kaisariani", 772, 758, 39], ["Agios", 30, 726, 39], ["nis", 30, 768, 39], ["tis", 30, 812, 39],
  ["ato-Tavros", 30, 860, 39], ["Kallithea", 297, 836, 39], ["Vyronas", 642, 832, 39],
  ["Dafni -", 600, 890, 39], ["Ymittos", 600, 936, 39], ["us", 30, 943, 39],
  ["Nea Smyrni", 222, 945, 39], ["Agios Dimitrios", 573, 1006, 39],
];
const mapSmall = [
  ["Kaskantami", 55, 195], ["414 m", 55, 222], ["Lofos Kokkou", 820, 230], ["304 m", 820, 257],
  ["Korakas", 1094, 596], ["363 m", 1094, 623], ["Cullu Pira", 1000, 730], ["436 m", 1000, 757],
  ["Kalogerou Hill", 955, 830], ["374 m", 955, 856], ["Kakorema", 1030, 937], ["738 m", 1030, 964],
];
const mapDistricts = [["TSALAVOUTA", 245, 491], ["GYZI DISTRICT", 566, 563], ["ROUF DISTRICT", 280, 713]];
const peaks = [[42, 235], [806, 270], [1078, 563], [1174, 652], [986, 770], [942, 797], [1017, 905]];

const CityMap = () => (
  <MapSvg viewBox="30 124 1161 878">
    <defs>
      <clipPath id="cityClip">
        <path d={CITY} />
      </clipPath>
    </defs>
    <rect x="30" y="124" width="1161" height="878" fill="#f1ece2" />
    <g fill="#dfe6c6">
      <path d="M30 124h100l-20 60-40 60H30z" />
      <path d="M610 124h90l-30 60-70 20z" />
      <path d="M780 240l60-30 40 60-60 30z" />
      <path d="M860 790l110-20 60 50-30 60-110 10z" fill="#d9e2bd" />
    </g>
    <g fill="#dcd9d2">
      <path d="M960 640l120 40 110-30v340H850l60-130z" />
      <path d="M850 860l50 20-20 30-30-20z" fill="#c9c5bd" />
    </g>
    <path d="M100 1002c10-30 60-30 110-15l20 15z" fill="#a8cdef" />
    {streets.map((r, i) => (
      <path key={i} d={r.d} fill="none" stroke={r.c} strokeWidth={r.w} />
    ))}
    <g fill="none" stroke="#c3a6da" strokeLinecap="round">
      <path d="M590 124L540 240 480 370 400 445 300 540 220 640 190 740 170 960 170 1002" strokeWidth="11" />
      <path d="M30 375l100 5 120 90 60 50" strokeWidth="7" stroke="#dcc8ea" />
      <path d="M1000 124l120 56 70 40" strokeWidth="9" />
      <path d="M1191 510l-80 40-50 70-20 40-40 20" strokeWidth="9" />
      <path d="M110 950l140 10 50 42" strokeWidth="8" stroke="#dcc8ea" />
    </g>
    <g fill="#6b8e5a">
      {peaks.map(([x, y]) => (
        <path key={x} d={`M${x} ${y - 12}l12 12h-24z`} />
      ))}
    </g>
    <path d={CITY} fill="#54c1ac" />
    <g clipPath="url(#cityClip)" fill="none" stroke="#4ab5a0">
      {streets.map((r, i) => (
        <path key={i} d={r.d} strokeWidth={2} />
      ))}
      <path d="M490 820L580 730 610 640 700 600 870 530M310 525L460 615 580 730" strokeWidth="5" stroke="#46a897" />
    </g>
    <g fontFamily={UI} fill="#3b3a39" stroke="#fff" strokeWidth="4" paintOrder="stroke" strokeOpacity="0.6">
      {mapLabels.map(([t, x, y, s]) => (
        <text key={t} x={x} y={y} fontSize={s}>{t}</text>
      ))}
      <text x="125" y="1000" fontSize="30" fill="#3a6fb0">Faliro</text>
    </g>
    <text x="590" y="744" fontSize="47" fontFamily={UI} fill="#1f6f66">Athens</text>
    <g fontFamily={UI} fill="#5f7a55" fontSize="24">
      {mapSmall.map(([t, x, y]) => (
        <text key={t} x={x} y={y}>{t}</text>
      ))}
    </g>
    <g fontFamily={UI} fill="#a09884" fontSize="21" fontWeight="700" letterSpacing="2">
      {mapDistricts.map(([t, x, y]) => (
        <text key={t} x={x} y={y}>{t}</text>
      ))}
    </g>
    <g>
      <rect x="42" y="958" width="11" height="11" fill="#f25022" />
      <rect x="54" y="958" width="11" height="11" fill="#7fba00" />
      <rect x="42" y="970" width="11" height="11" fill="#00a4ef" />
      <rect x="54" y="970" width="11" height="11" fill="#ffb900" />
      <text x="70" y="974" fontSize="17" fontFamily={UI} fill="#605e5c">Microsoft Bing</text>
      <text x="630" y="980" fontSize="20" fontFamily={UI} fill="#3b3a39">© 2025 TomTom, © 2025 Microsoft Corporation</text>
      <text x="1078" y="980" fontSize="20" fontFamily={UI} fill="#2b7cbd" textDecoration="underline">Terms</text>
    </g>
  </MapSvg>
);

const TableGlyph = () => (
  <svg width="16" height="16" viewBox="0 0 16 16" fill="none" stroke="#3b3a39" strokeWidth="1.3">
    <rect x="1" y="1" width="14" height="14" rx="2" />
    <path d="M1 5.7h14M1 10.3h14M5.7 1v14M10.3 1v14" />
  </svg>
);
const DoubleChevron = ({ left }) => (
  <svg width="16" height="16" viewBox="0 0 16 16" fill="none" stroke="#252423" strokeWidth="1.3" style={left ? { transform: "scaleX(-1)" } : undefined}>
    <path d="M2 1l7 7-7 7M8 1l7 7-7 7" />
  </svg>
);
const Chev = ({ size = 26, color = "#605e5c", up }) =>
  up ? <ChevronUp size={size} color={color} strokeWidth={0.8} /> : <ChevronDown size={size} color={color} strokeWidth={size > 20 ? 0.8 : 1} />;

const Olympic = () => (
  <Logo viewBox="0 0 140 66" fill="none" strokeWidth="3">
    <circle cx="22" cy="22" r="19.5" stroke="#0b81d0" />
    <circle cx="45" cy="41" r="19.5" stroke="#fcb20d" />
    <circle cx="68" cy="22" r="19.5" stroke="#000" />
    <circle cx="91" cy="41" r="19.5" stroke="#08a34c" />
    <circle cx="114" cy="22" r="19.5" stroke="#ec1c2c" />
    <path d="M36 8.5a19.5 19.5 0 0 1 5 13.5" stroke="#0b81d0" />
    <path d="M82 8.5a19.5 19.5 0 0 1 5 13.5" stroke="#000" />
  </Logo>
);

const Handles = () => (
  <>
    <Handle $w={12} $h={3} $l={-3} $t={-3} />
    <Handle $w={3} $h={12} $l={-3} $t={-3} />
    <Handle $w={12} $h={3} $l={129} $t={-3} />
    <Handle $w={3} $h={12} $l={138} $t={-3} />
    <Handle $w={12} $h={3} $l={-3} $t={52} />
    <Handle $w={3} $h={12} $l={-3} $t={43} />
    <Handle $w={12} $h={3} $l={129} $t={52} />
    <Handle $w={3} $h={12} $l={138} $t={43} />
    <Handle $w={15} $h={4} $l={61} $t={-3} />
    <Handle $w={15} $h={4} $l={61} $t={51} />
    <Handle $w={4} $h={14} $l={-3} $t={20} />
    <Handle $w={4} $h={14} $l={137} $t={20} />
  </>
);

const Filters = [
  { n: "Games", v: "is (All)" },
  { n: "Sport", v: "is Gymnastics" },
  { n: "Year", v: "is (All)", sum: true },
  { n: "Team", v: "is (All)" },
];

const kpis = [
  { l: "Total Medal", v: "1", r: 15, t: 18, icon: <Medal fill="#fdcf83" line="#f5a73a" /> },
  { l: "Gold", v: "1", r: 15, t: 18, icon: <Medal fill="#f9a12f" line="#f0921d" num="1" /> },
  { l: "Silver", v: "1", r: 15, t: 18, icon: <Medal fill="#cfd8dc" line="#bcc6cb" num="2" label="#455a64" /> },
  { l: "Bronze", v: "- -", r: 15, t: 18, icon: <Medal fill="#f2813c" line="#e87128" num="3" label="#6e3208" /> },
  { l: "Total Athletes", v: "1", r: 8, t: 21, icon: <Runner /> },
];

export default function App() {
  return (
    <Shell>
      <GlobalStyle />
      <TitleBar>
        <TitleLeft>
          <svg width="21" height="21" viewBox="0 0 21 21" fill="none" stroke="#e1dfdd" strokeWidth="1.3">
            <path d="M1 1h16l3 3v16H1z" />
            <path d="M5 1v6h10V1M5 20v-8h11v8" />
          </svg>
          <TitleText $ml={19}><Undo2 size={20} strokeWidth={1.3} color="#f3f2f1" /></TitleText>
          <TitleText $ml={17}><Redo2 size={20} strokeWidth={1.3} color="#797775" /></TitleText>
          <TitleText $ml={9}>Olympic dashboard</TitleText>
          <TitleText $ml={6}>•</TitleText>
          <TitleText $ml={7}>Last saved: 5/14/2025 at 4:43 PM</TitleText>
          <Caret />
        </TitleLeft>
        <SearchBox>
          <Flip><Search size={24} strokeWidth={1} color="#252423" /></Flip>
          Search
        </SearchBox>
        <TitleRight>
          <SignIn>Sign in</SignIn>
          <Avatar>
            <svg width="17" height="22" viewBox="0 0 17 22" fill="none" stroke="#252423" strokeWidth="1.8">
              <circle cx="8.5" cy="6" r="3.5" />
              <path d="M3 12h11v3a5 5 0 0 1-11 0z" />
            </svg>
          </Avatar>
          <WinBtn><Minus size={14} color="#fff" strokeWidth={1.3} /></WinBtn>
          <WinBtn><Square size={13} color="#fff" strokeWidth={1.3} /></WinBtn>
          <WinBtn><X size={17} color="#fff" strokeWidth={1.2} /></WinBtn>
        </TitleRight>
      </TitleBar>

      <Ribbon>
        <TabsRow>
          <RibbonTab $w={40} $ml={22}>File</RibbonTab>
          <RibbonTab $w={47} $ml={40} $active>Home</RibbonTab>
          <RibbonTab $w={43} $ml={39}>Insert</RibbonTab>
          <RibbonTab $w={74} $ml={40}>Modeling</RibbonTab>
          <RibbonTab $w={37} $ml={40}>View</RibbonTab>
          <RibbonTab $w={70} $ml={39}>Optimize</RibbonTab>
          <RibbonTab $w={36} $ml={39}>Help</RibbonTab>
          <RibbonTab $w={94} $ml={19} $ctx>Format</RibbonTab>
          <RibbonTab $w={124} $ml={5} $ctx>Data / Drill</RibbonTab>
          <ShareBtn>
            <svg width="21" height="21" viewBox="0 0 19 19" fill="none" stroke="#fff" strokeWidth="1.1">
              <path d="M2 6v11h12v-3M6 13c0-5 3-7 7-7V2l5 6-5 5V9c-3 0-5 1-7 4z" />
            </svg>
            Share
            <ChevronDown size={15} strokeWidth={1.3} />
          </ShareBtn>
        </TabsRow>
        <ToolsRow>
          <Group $w={200}>
            <GroupBody $pl={4}>
              <Big w={62} icon="paste" lines={["Paste"]} off />
              <SmallCol>
                <SmallBtn>
                  <svg width="18" height="24" viewBox="0 0 18 24" fill="none" stroke="#484644" strokeWidth="1.2">
                    <path d="M13 1 6 16M5 1l7 15" />
                    <circle cx="5" cy="19.5" r="3" stroke="#2b7cbd" />
                    <circle cx="13" cy="19.5" r="3" stroke="#2b7cbd" />
                  </svg>
                  Cut
                </SmallBtn>
                <SmallBtn>
                  <svg width="18" height="24" viewBox="0 0 18 24" fill="#fff" stroke="#484644" strokeWidth="1.2">
                    <path d="M1 2h8l3 3v14H1z" />
                    <path d="M6 8h7l4 4v11H6zM8 15h7M8 18h7" />
                  </svg>
                  Copy
                </SmallBtn>
                <SmallBtn>
                  <svg width="18" height="24" viewBox="0 0 18 24">
                    <path d="M1 15l6-5 7 7-6 6c-2-2-5-5-7-8z" fill="#f2a24a" stroke="#c8600f" />
                    <path d="M8 10l6-7c2-2 4 0 3 2l-5 8z" fill="#fff" stroke="#484644" />
                  </svg>
                  Format painter
                </SmallBtn>
              </SmallCol>
            </GroupBody>
            <GroupLabel>Clipboard</GroupLabel>
          </Group>
          <Group $w={450}>
            <GroupBody $pl={6}>
              <Big w={60} icon="getData" lines={["Get", "data"]} caret />
              <Big w={60} icon="excel" lines={["Excel", "workbook"]} />
              <Big w={78} icon="onelake" lines={["OneLake", "catalog"]} caret />
              <Big w={40} icon="sql" lines={["SQL", "Server"]} />
              <Big w={60} icon="enter" lines={["Enter", "data"]} />
              <Big w={60} icon="dataverse" lines={["Dataverse"]} />
              <Big w={76} icon="recent" lines={["Recent", "sources"]} caret />
            </GroupBody>
            <GroupLabel>Data</GroupLabel>
          </Group>
          <Group $w={144}>
            <GroupBody $pl={4}>
              <Big w={80} icon="transform" lines={["Transform", "data"]} caret />
              <Big w={46} icon="refresh" lines={["Refresh"]} />
            </GroupBody>
            <GroupLabel>Queries</GroupLabel>
          </Group>
          <Group $w={183}>
            <GroupBody $pl={12}>
              <Big w={46} icon="newVisual" lines={["New", "visual"]} />
              <Big w={56} icon="textBox" lines={["Text", "box"]} />
              <Big w={52} icon="moreVisuals" lines={["More", "visuals"]} caret />
            </GroupBody>
            <GroupLabel>Insert</GroupLabel>
          </Group>
          <Group $w={233}>
            <GroupBody $pl={13}>
              <Big w={80} icon="calcVisual" lines={["New visual", "calculation"]} caret off />
              <Big w={78} icon="measure" lines={["New", "measure"]} />
              <Big w={44} icon="quick" lines={["Quick", "measure"]} />
            </GroupBody>
            <GroupLabel>Calculations</GroupLabel>
          </Group>
          <Group $w={92}>
            <GroupBody $center>
              <BigBtn $w={80} $off>
                <IconBox><RI n="sensitivity" /></IconBox>
                <BtnLine>Sensitivity</BtnLine>
                <BtnLine><ChevronDown size={10} strokeWidth={2} /></BtnLine>
              </BigBtn>
            </GroupBody>
            <GroupLabel>Sensitivity</GroupLabel>
          </Group>
          <Group $w={74}>
            <GroupBody $center>
              <Big w={60} icon="publish" lines={["Publish"]} />
            </GroupBody>
            <GroupLabel>Share</GroupLabel>
          </Group>
          <Group $w={73}>
            <GroupBody $center>
              <Big w={60} icon="copilot" lines={["Copilot"]} />
            </GroupBody>
            <GroupLabel>Copilot</GroupLabel>
          </Group>
          <Collapse><ChevronUp size={12} strokeWidth={2} /></Collapse>
        </ToolsRow>
      </Ribbon>

      <Main>
        <Rail>
          <RailItem $active>
            <svg width="18" height="18" viewBox="0 0 18 18" fill="none" stroke="#252423" strokeWidth="1.1">
              <path d="M.5 1v16h17" />
              <path d="M3 5h3v9H3zM8 8h3v6H8zM13 3h3v11h-3z" />
            </svg>
          </RailItem>
          <RailItem>
            <svg width="21" height="20" viewBox="0 0 21 20" fill="none" stroke="#8a8886" strokeWidth="1.2">
              <rect x=".6" y=".6" width="19.8" height="18.8" />
              <path d="M.6 5.5h19.8M.6 10h19.8M.6 14.5h19.8M7 5.5v14M14 5.5v14" />
            </svg>
          </RailItem>
          <RailItem>
            <svg width="23" height="24" viewBox="0 0 23 24" fill="none" stroke="#8a8886" strokeWidth="1.3">
              <path d="M1 9h9v8H1zM1 13h9M14 1h8v8h-8zM14 5h8M14 11h8v12h-8zM14 17h8M10 12h4" />
            </svg>
          </RailItem>
          <RailItem>
            <svg width="24" height="24" viewBox="0 0 24 24" fill="none" stroke="#8a8886" strokeWidth="1.1">
              <path d="M6 13V1h9l5 5v12c1-2 1-6 0-9M15 1v5h5" />
              <text x="0" y="21" fontSize="7.5" fontWeight="700" fill="#8a8886" stroke="none" fontFamily={UI}>DAX</text>
            </svg>
          </RailItem>
        </Rail>

        <CenterCol>
          <CanvasRow>
            <Canvas>
              <Page>
                <NavArrow $x={5} $y={5}>
                  <svg width="22" height="22" viewBox="0 0 22 22" fill="none" stroke="#605e5c" strokeWidth="1.8">
                    <circle cx="11" cy="11" r="9.5" />
                    <path d="M17 11H5M10 6l-5 5 5 5" />
                  </svg>
                </NavArrow>
                <NavArrow $x={1189} $y={9}>
                  <svg width="18" height="16" viewBox="0 0 18 16" fill="none" stroke="#605e5c" strokeWidth="1.5">
                    <path d="M0 8h17M10 1l7 7-7 7" />
                  </svg>
                </NavArrow>

                <SideCard>
                  <Olympic />
                  <SideTitle>Olympic Games</SideTitle>
                  <Slicer $mt={3}>
                    <SlicerHead>Year<Chev size={18} /></SlicerHead>
                    <SelectBox $h={21}>1896<Chev /></SelectBox>
                    <ListBox>
                      <Option><Check $on />Bronze</Option>
                      <Option><Check />Gold</Option>
                      <Option><Check />NA</Option>
                    </ListBox>
                    <SelectBox $ml={-1}>Bronze<Chev up /></SelectBox>
                  </Slicer>
                  <Slicer $mt={48}>
                    <SlicerHead>Gender<Chev size={18} /></SlicerHead>
                    <SelectBox>M<Chev /></SelectBox>
                  </Slicer>
                  <VisualTools>
                    <Filter size={20} strokeWidth={1} color="#605e5c" />
                    <svg width="19" height="18" viewBox="0 0 19 18" fill="none" stroke="#8a8886" strokeWidth="1.2">
                      <path d="M9 1H1v16h17V9M1 10h8v7M12 1h6v6M18 1l-7 7" />
                    </svg>
                    <svg width="19" height="6" viewBox="0 0 19 6" fill="#605e5c">
                      <circle cx="2" cy="3" r="1.5" />
                      <circle cx="9.5" cy="3" r="1.5" />
                      <circle cx="17" cy="3" r="1.5" />
                    </svg>
                  </VisualTools>
                  <Frame>
                    <Handles />
                    <SlicerHead>Sport<Chev size={18} /></SlicerHead>
                    <SelectBox>Gymnastics<Chev /></SelectBox>
                  </Frame>
                  <Slicer $mt={31}>
                    <SlicerHead>Age Bucket<Chev size={18} /></SlicerHead>
                    <SelectBox>Uder 20<Chev /></SelectBox>
                  </Slicer>
                </SideCard>

                <ReportCol>
                  <KpiStrip>
                    {kpis.map((k) => (
                      <KpiCard key={k.l}>
                        <KpiLabel>{k.l}</KpiLabel>
                        <KpiValue>{k.v}</KpiValue>
                        <KpiIcon $r={k.r} $t={k.t}>{k.icon}</KpiIcon>
                      </KpiCard>
                    ))}
                  </KpiStrip>
                  <ChartRow $mt={20}>
                    <Panel $w={480} $h={265} $ml={34} $mt={7}>
                      <PanelTitle>Count of NOC by Sport</PanelTitle>
                      <NocChart />
                    </Panel>
                    <Panel $w={462} $h={278} $ml={14}>
                      <PanelTitle>Medals by Country</PanelTitle>
                      <CountryChart />
                    </Panel>
                  </ChartRow>
                  <ChartRow $mt={-1}>
                    <Panel $w={212} $h={314}>
                      <PanelTitle>Count of Medal by Team</PanelTitle>
                      <TeamChart />
                    </Panel>
                    <Panel $w={348} $h={334} $ml={13} $mt={8}>
                      <PanelTitle $pl={8}>Count of Season by Games</PanelTitle>
                      <Treemap>1896 Summer</Treemap>
                    </Panel>
                    <Panel $w={394} $h={337} $ml={23} $mt={8}>
                      <PanelTitle>City and Sport</PanelTitle>
                      <MapLegend>
                        <LegendName>Sport</LegendName>
                        <LegendDot />
                        Gymnastics
                      </MapLegend>
                      <CityMap />
                    </Panel>
                  </ChartRow>
                </ReportCol>
              </Page>
            </Canvas>
            <FilterPane>
              <DoubleChevron left />
              <svg width="16" height="16" viewBox="0 0 16 16" fill="none" stroke="#252423" strokeWidth="1.2" style={{ marginTop: 20 }}>
                <path d="M15 1v14L6 9H1l5-2z" />
              </svg>
              <FilterLabel>Filters</FilterLabel>
            </FilterPane>
          </CanvasRow>
          <PageTabs>
            <TabTools>
              <DeviceBtn $active $mr={25}>
                <svg width="24" height="24" viewBox="0 0 24 24" fill="none" stroke="#484644" strokeWidth="1.2">
                  <rect x="2" y="2" width="20" height="15" />
                  <path d="M12 17v4M7 21h10" />
                </svg>
              </DeviceBtn>
              <DeviceBtn $mr={6}>
                <svg width="16" height="28" viewBox="0 0 16 28" fill="none" stroke="#484644" strokeWidth="1.2">
                  <rect x="1" y="1" width="14" height="26" rx="2" />
                  <circle cx="8" cy="23" r="0.8" fill="#484644" />
                </svg>
              </DeviceBtn>
              <svg width="50" height="30" viewBox="0 0 50 30" fill="#c8c6c4">
                <path d="M19 9v10l-5-5zM42 9v10l5-5z" />
              </svg>
            </TabTools>
            <PageTab $w={123}>Dashboard</PageTab>
            <PageTab $w={178}>olympic dashboard</PageTab>
            <PageTab $w={190} $active>Dashboard overview</PageTab>
            <PageTab $w={224}>2024 Dashboard overview</PageTab>
            <AddTab>
              <svg width="17" height="17" viewBox="0 0 17 17" stroke="#fff" strokeWidth="3.5">
                <path d="M8.5 1v15M1 8.5h15" />
              </svg>
            </AddTab>
          </PageTabs>
        </CenterCol>

        <VizPane>
          <PaneHead $pl={10}>Visualizations<DoubleChevron /></PaneHead>
          <BuildLabel>Build visual</BuildLabel>
          <BuildTabs>
            <BuildTab $active $mr={44}>
              <svg width="30" height="30" viewBox="0 0 30 30">
                <path d="M5 3h20" stroke="#484644" />
                <rect x="3" y="6" width="24" height="9" fill="#117865" stroke="#484644" strokeDasharray="2 1" />
                <rect x="3" y="17" width="24" height="9" fill="#117865" stroke="#484644" strokeDasharray="2 1" />
              </svg>
            </BuildTab>
            <BuildTab $mr={41}>
              <svg width="30" height="30" viewBox="0 0 30 30" fill="none" stroke="#3b3a39" strokeWidth="1.2">
                <path d="M2 24V14h6v10M8 14V5h8v9M16 5v9" />
                <path d="M12 27c4 1 7-1 9-4l7-11-2-2-9 9c-3 2-2 5-5 8zM18 20l3 3" />
              </svg>
            </BuildTab>
            <BuildTab>
              <svg width="32" height="32" viewBox="0 0 32 32" fill="none" stroke="#3b3a39" strokeWidth="1.2">
                <circle cx="14" cy="14" r="12" />
                <path d="M22 23l7 7" strokeWidth="2.2" />
                <path d="M5 16l5-3 4 3 4-5 6 1M8 18v7M12 17v8M16 18v7M20 15v7" />
              </svg>
            </BuildTab>
            <Notch />
          </BuildTabs>
          <VizGrid>
            {vizIcons.map((ic, i) => (
              <VizCell key={i} $on={i === 27}>
                <svg viewBox="0 0 24 24">{ic}</svg>
              </VizCell>
            ))}
          </VizGrid>
          <WellArea>
            <ScrollThumb />
            <WellLabel>Field</WellLabel>
            <DropZone $mt={5} $h={44} $white>
              <FieldPill>
                Sport
                <PillIcons>
                  <ChevronDown size={18} strokeWidth={0.9} />
                  <X size={16} strokeWidth={1} />
                </PillIcons>
              </FieldPill>
            </DropZone>
            <WellLabel $bold $mt={12}>Drill through</WellLabel>
            <SwitchRow $mt={2}>
              Cross-report
              <Toggle><ToggleKnob />Off</Toggle>
            </SwitchRow>
            <SwitchRow>
              Keep all filters
              <Toggle $on>On<ToggleKnob $on /></Toggle>
            </SwitchRow>
            <DropZone $mt={6} $h={175}>
              {Filters.map((f) => (
                <FilterCard key={f.n}>
                  <FilterHead>
                    <FilterName $sum={f.sum}>
                      {f.sum && <Sigma>Σ</Sigma>}
                      {f.n}
                    </FilterName>
                    <FilterIcons>
                      <ChevronDown size={18} strokeWidth={0.9} />
                      <X size={15} strokeWidth={1} />
                      <Lock size={16} strokeWidth={1} color="#2b3a55" />
                    </FilterIcons>
                  </FilterHead>
                  {f.v}
                </FilterCard>
              ))}
            </DropZone>
          </WellArea>
        </VizPane>

        <DataPane>
          <PaneHead $pl={11}>Data<DoubleChevron /></PaneHead>
          <DataSearch>
            <Search size={20} strokeWidth={1} color="#484644" />
            Search
          </DataSearch>
          <TreeList>
            {["athlete", "athletes (1)", "Measure_"].map((t, i) => (
              <TreeRow key={t}>
                <ChevronRight size={18} strokeWidth={0.9} />
                <TableGlyph />
                {t}
                {i === 0 && (
                  <TreeBadge>
                    <svg width="8" height="8" viewBox="0 0 8 8" fill="none" stroke="#fff" strokeWidth="1.5">
                      <path d="M1 4l2 2 4-4" />
                    </svg>
                  </TreeBadge>
                )}
              </TreeRow>
            ))}
          </TreeList>
        </DataPane>
      </Main>

      <StatusBar>
        Page 3 of 4
        <Zoomer>
          <Minus size={11} strokeWidth={2.5} color="#605e5c" />
          <ZoomTrack>
            <ZoomThumb />
            <ZoomTick />
          </ZoomTrack>
          <svg width="11" height="11" viewBox="0 0 11 11" stroke="#605e5c" strokeWidth="1.8">
            <path d="M5.5 0v11M0 5.5h11" />
          </svg>
          <ZoomPct>60%</ZoomPct>
          <svg width="20" height="16" viewBox="0 0 20 16" fill="none" stroke="#605e5c" strokeWidth="1.1">
            <rect x=".6" y=".6" width="18.8" height="14.8" />
            <path d="M3 6V3h3M14 3h3v3M17 10v3h-3M6 13H3v-3" />
          </svg>
        </Zoomer>
      </StatusBar>
    </Shell>
  );
}
